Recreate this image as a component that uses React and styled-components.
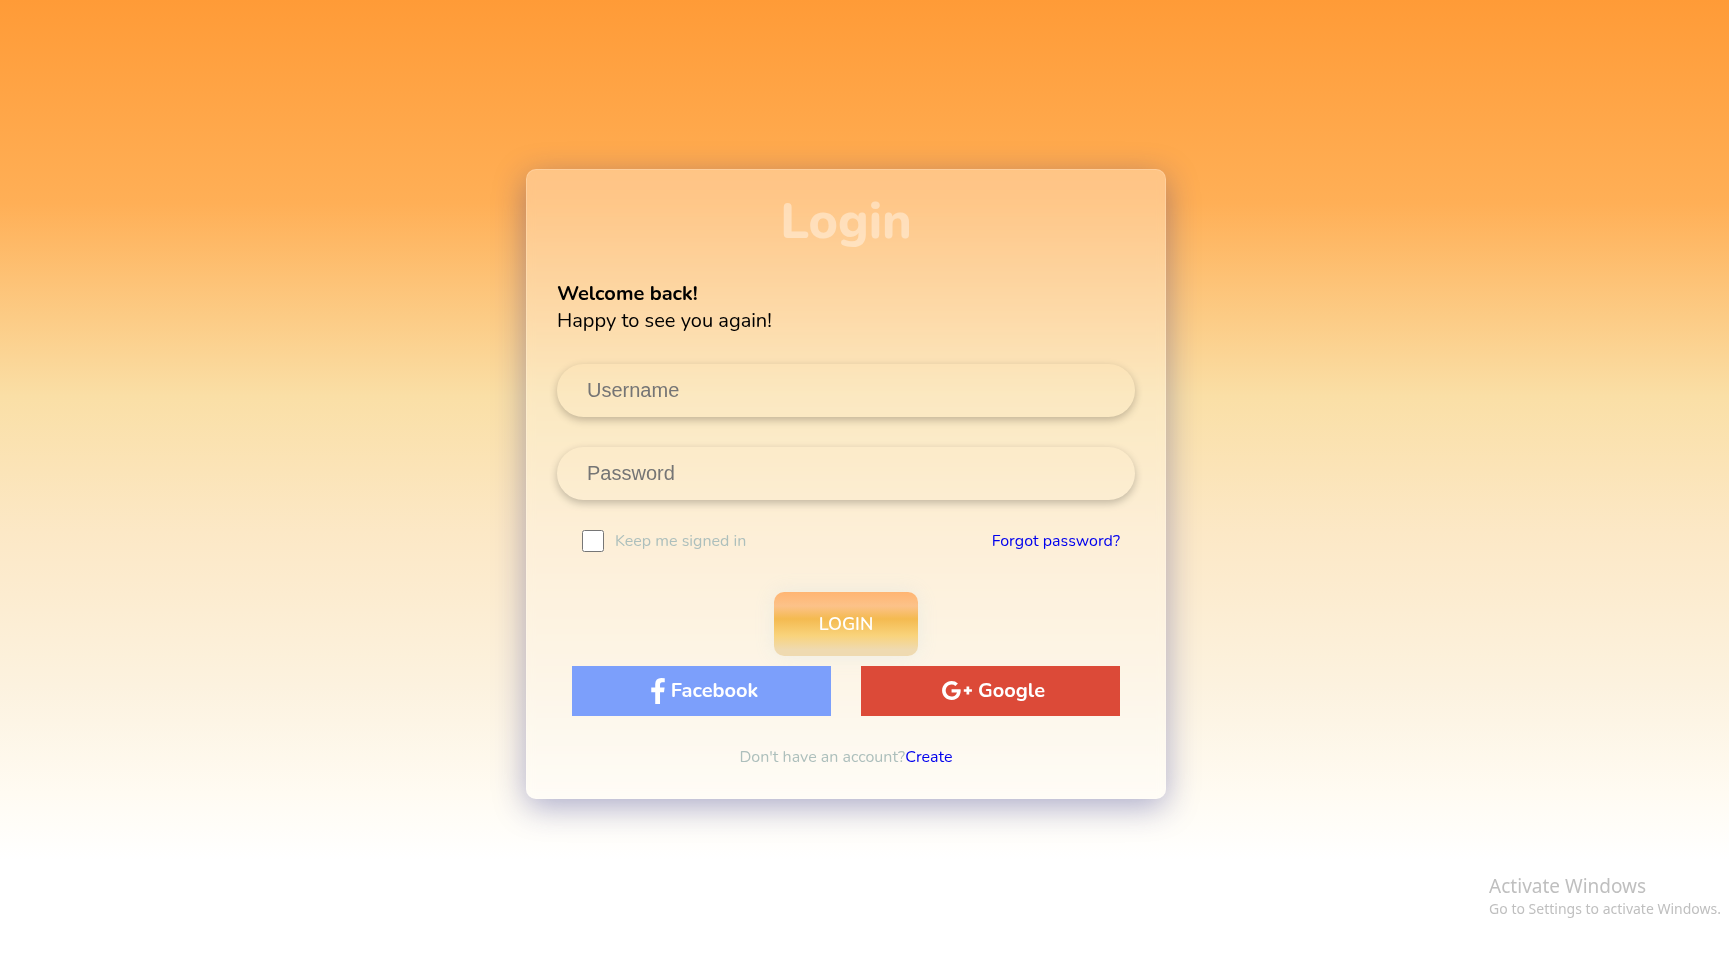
import React from "react";
import styled, { createGlobalStyle } from "styled-components";

const GlobalStyle = createGlobalStyle`
  * { box-sizing: border-box; }
  body {
    margin: 0;
    font-family: Nunito, Lato, sans-serif;
    font-size: 16px;
    color: #000;
  }
  a { color: #0000ee; text-decoration: none; }
`;

const Page = styled.main`
  min-height: 100vh;
  display: flex;
  align-items: center;
  justify-content: center;
  padding: 24px 37px 24px 0;
  background: linear-gradient(
    180deg,
    #ff9b37 0%,
    #ffaf56 21%,
    #fadfa6 41%,
    #fce8c6 55%,
    #fcf2df 71%,
    #fffbf2 82%,
    #ffffff 89%
  );
`;

const Card = styled.form`
  width: 100%;
  max-width: 640px;
  padding: 24px 30px 30px;
  display: flex;
  flex-direction: column;
  border: 1px solid rgba(255, 255, 255, 0.18);
  border-radius: 10px;
  background: rgba(255, 255, 255, 0.3);
  box-shadow: 0 8px 32px 0 rgba(31, 38, 135, 0.37);
  backdrop-filter: blur(4px);
`;

const Title = styled.h1`
  margin: 0 0 30px;
  font-size: 50px;
  line-height: 56px;
  font-weight: 800;
  text-align: center;
  color: rgba(255, 255, 255, 0.4);
`;

const Greeting = styled.p`
  margin: 0 0 30px;
  font-size: 20px;
  line-height: 27px;
  font-weight: 400;
`;

const Strong = styled.strong`
  display: block;
  font-weight: 700;
`;

const Field = styled.input`
  width: 100%;
  height: 53px;
  margin-bottom: 30px;
  padding: 0 30px;
  border: 0;
  border-radius: 27px;
  outline: 0;
  background: transparent;
  box-shadow: 0 3px 8px rgba(0, 0, 0, 0.24);
  font-family: "Liberation Sans", Arial, sans-serif;
  font-size: 20px;
  &::placeholder { color: #757575; }
`;

const Options = styled.div`
  display: flex;
  align-items: center;
  justify-content: space-between;
  height: 22px;
  margin-bottom: 40px;
  padding: 0 15px 0 25px;
`;

const CheckLabel = styled.label`
  display: flex;
  align-items: center;
  gap: 11px;
  color: #adbfbc;
`;

const Checkbox = styled.input`
  width: 22px;
  height: 22px;
  margin: 0;
`;

const Submit = styled.button`
  align-self: center;
  width: 144px;
  height: 64px;
  margin-bottom: 10px;
  border: 0;
  border-radius: 10px;
  background: linear-gradient(
    180deg,
    #ffb572 0%,
    #fcc289 22%,
    #f4ba50 42%,
    #f9d37b 68%,
    #efdab0 90%
  );
  box-shadow: 0 0 20px rgba(150, 200, 230, 0.16);
  color: #fff;
  font-family: inherit;
  font-size: 18px;
  font-weight: 600;
  text-transform: uppercase;
`;

const Socials = styled.div`
  display: grid;
  grid-template-columns: 1fr 1fr;
  gap: 30px;
  margin-bottom: 30px;
  padding: 0 15px;
`;

const SocialButton = styled.button`
  display: flex;
  align-items: center;
  justify-content: center;
  gap: 6px;
  height: 50px;
  padding: 0 0 0 6px;
  border: 0;
  background: ${(p) => p.$color};
  color: #fff;
  font-family: inherit;
  font-size: 20px;
  font-weight: 700;
`;

const Signup = styled.p`
  margin: 0;
  line-height: 22px;
  text-align: center;
  color: #adbfbc;
`;

const Watermark = styled.aside`
  position: fixed;
  right: 8px;
  bottom: 48px;
  color: #bfbfbf;
  font-family: "Segoe UI", "Noto Sans", sans-serif;
  font-size: 14px;
  line-height: 20px;
`;

const WatermarkTitle = styled.div`
  font-size: 19px;
  line-height: 26px;
`;

const FacebookIcon = () => (
  <svg width="14" height="26" viewBox="479 0 864 1664" fill="currentColor" aria-hidden="true">
    <path d="M1343 12v264h-157q-86 0-116 36t-30 108v189h293l-39 296h-254v759h-306v-759h-255v-296h255v-218q0-186 104-288.5t277-102.5q147 0 228 12z" />
  </svg>
);

const GooglePlusIcon = () => (
  <svg width="30" height="19" viewBox="0 163 2304 1466" fill="currentColor" aria-hidden="true">
    <path d="M1437 913q0 208-87 370.5t-248 254-369 91.5q-149 0-285-58t-234-156-156-234-58-285 58-285 156-234 234-156 285-58q286 0 491 192l-199 191q-117-113-292-113-123 0-227.5 62t-165.5 168.5-61 232.5 61 232.5 165.5 168.5 227.5 62q83 0 152.5-23t114.5-57.5 78.5-78.5 49-83 21.5-74h-416v-252h692q12 63 12 122zm867-122v210h-209v209h-210v-209h-209v-210h209v-209h210v209h209z" />
  </svg>
);

export default function App() {
  return (
    <>
      <GlobalStyle />
      <Page>
        <Card onSubmit={(e) => e.preventDefault()}>
          <Title>Login</Title>
          <Greeting>
            <Strong>Welcome back!</Strong>
            Happy to see you again!
          </Greeting>
          <Field type="text" placeholder="Username" aria-label="Username" />
          <Field type="password" placeholder="Password" aria-label="Password" />
          <Options>
            <CheckLabel>
              <Checkbox type="checkbox" />
              Keep me signed in
            </CheckLabel>
            <a href="#forgot">Forgot password?</a>
          </Options>
          <Submit type="submit">Login</Submit>
          <Socials>
            <SocialButton type="button" $color="#7c9ffb">
              <FacebookIcon />
              Facebook
            </SocialButton>
            <SocialButton type="button" $color="#dc4a38">
              <GooglePlusIcon />
              Google
            </SocialButton>
          </Socials>
          <Signup>
            Don't have an account?<a href="#create">Create</a>
          </Signup>
        </Card>
      </Page>
      <Watermark>
        <WatermarkTitle>Activate Windows</WatermarkTitle>
        Go to Settings to activate Windows.
      </Watermark>
    </>
  );
}
